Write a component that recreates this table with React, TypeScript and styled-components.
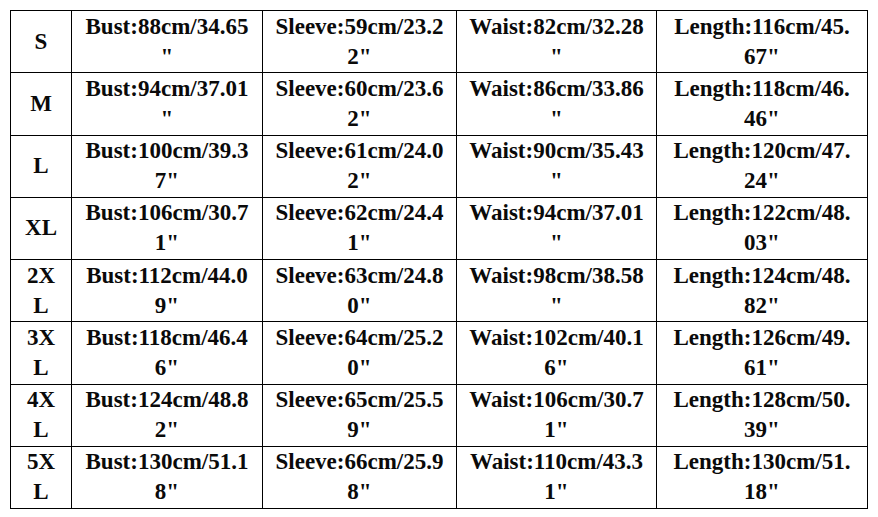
import React from 'react';
import styled, { createGlobalStyle } from 'styled-components';

const GlobalStyle = createGlobalStyle`
  html, body {
    margin: 0;
    padding: 0;
    background: #ffffff;
  }
  body {
    font-family: "Liberation Serif", "Times New Roman", serif;
  }
`;

const Page = styled.div`
  width: 878px;
  height: 517px;
  padding: 10px 0 0 10px;
  box-sizing: border-box;
  background: #ffffff;
`;

const Table = styled.table`
  border-collapse: collapse;
  table-layout: fixed;
  width: 857px;
  font-family: "Liberation Serif", "Times New Roman", serif;
  font-weight: bold;
  font-size: 23px;
  line-height: 30px;
  color: #0a0a0a;
`;

const Row = styled.tr`
  height: 62.25px;
`;

const Cell = styled.td`
  border: 1px solid #000;
  padding: 0;
  text-align: center;
  vertical-align: middle;
  white-space: nowrap;
  overflow: hidden;
`;

// 每列宽度
const widths = [61, 191, 194, 200, 211];

// 每个单元格按原图分成两行
const rows: { size: string[]; cells: string[][] }[] = [
  {
    size: ['S'],
    cells: [
      ['Bust:88cm/34.65', '"'],
      ['Sleeve:59cm/23.2', '2"'],
      ['Waist:82cm/32.28', '"'],
      ['Length:116cm/45.', '67"'],
    ],
  },
  {
    size: ['M'],
    cells: [
      ['Bust:94cm/37.01', '"'],
      ['Sleeve:60cm/23.6', '2"'],
      ['Waist:86cm/33.86', '"'],
      ['Length:118cm/46.', '46"'],
    ],
  },
  {
    size: ['L'],
    cells: [
      ['Bust:100cm/39.3', '7"'],
      ['Sleeve:61cm/24.0', '2"'],
      ['Waist:90cm/35.43', '"'],
      ['Length:120cm/47.', '24"'],
    ],
  },
  {
    size: ['XL'],
    cells: [
      ['Bust:106cm/30.7', '1"'],
      ['Sleeve:62cm/24.4', '1"'],
      ['Waist:94cm/37.01', '"'],
      ['Length:122cm/48.', '03"'],
    ],
  },
  {
    size: ['2X', 'L'],
    cells: [
      ['Bust:112cm/44.0', '9"'],
      ['Sleeve:63cm/24.8', '0"'],
      ['Waist:98cm/38.58', '"'],
      ['Length:124cm/48.', '82"'],
    ],
  },
  {
    size: ['3X', 'L'],
    cells: [
      ['Bust:118cm/46.4', '6"'],
      ['Sleeve:64cm/25.2', '0"'],
      ['Waist:102cm/40.1', '6"'],
      ['Length:126cm/49.', '61"'],
    ],
  },
  {
    size: ['4X', 'L'],
    cells: [
      ['Bust:124cm/48.8', '2"'],
      ['Sleeve:65cm/25.5', '9"'],
      ['Waist:106cm/30.7', '1"'],
      ['Length:128cm/50.', '39"'],
    ],
  },
  {
    size: ['5X', 'L'],
    cells: [
      ['Bust:130cm/51.1', '8"'],
      ['Sleeve:66cm/25.9', '8"'],
      ['Waist:110cm/43.3', '1"'],
      ['Length:130cm/51.', '18"'],
    ],
  },
];

function Lines({ lines }: { lines: string[] }) {
  return (
    <>
      {lines.map((line, i) => (
        <React.Fragment key={i}>
          {i > 0 && <br />}
          {line}
        </React.Fragment>
      ))}
    </>
  );
}

export default function App() {
  return (
    <Page>
      <GlobalStyle />
      <Table>
        <colgroup>
          {widths.map((w, i) => (
            <col key={i} style={{ width: w }} />
          ))}
        </colgroup>
        <tbody>
          {rows.map((row, r) => (
            <Row key={r}>
              <Cell>
                <Lines lines={row.size} />
              </Cell>
              {row.cells.map((cell, c) => (
                <Cell key={c}>
                  <Lines lines={cell} />
                </Cell>
              ))}
            </Row>
          ))}
        </tbody>
      </Table>
    </Page>
  );
}
